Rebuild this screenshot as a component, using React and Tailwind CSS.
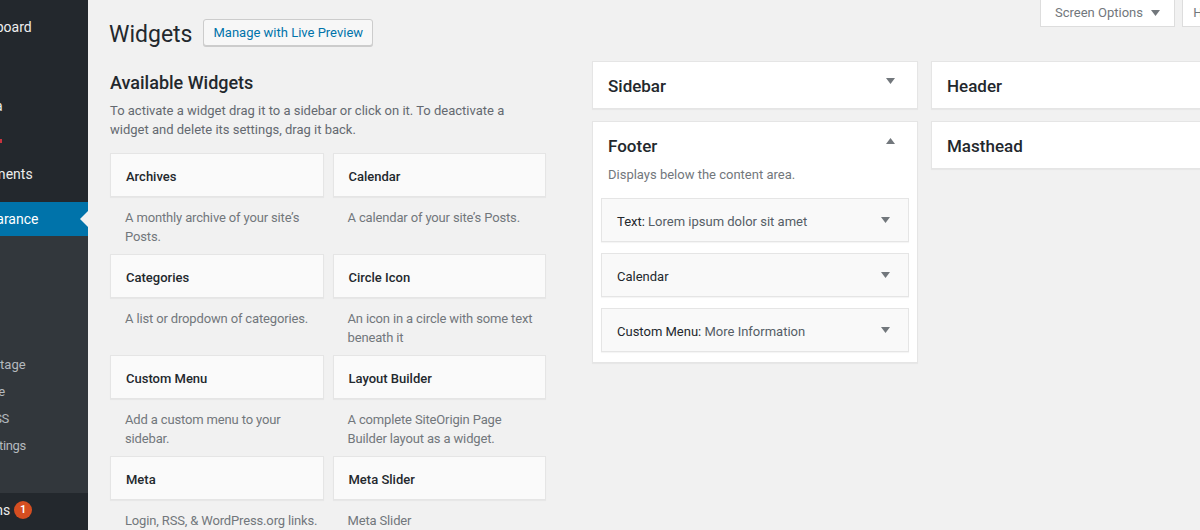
import { useState } from "react";

const FONT = "font-['Segoe_UI',Roboto,'Liberation_Sans',sans-serif]";

const menuTop = [
  { name: "Dashboard" },
  { sep: true },
  { name: "Posts" },
  { name: "Media" },
  { name: "Pages", dot: true, tight: true },
  { name: "Comments" },
  { sep: true },
];

const appearanceSub = [
  { name: "Themes" },
  { name: "Customize", tight: true },
  { name: "Widgets" },
  { name: "Menus" },
  { name: "About Vantage" },
  { name: "Edit Theme" },
  { name: "Custom CSS", tight: true },
  { name: "Theme Settings", tight: true },
  { name: "Editor" },
];

const availableWidgets = [
  { name: "Archives", description: "A monthly archive of your site’s Posts." },
  { name: "Calendar", description: "A calendar of your site’s Posts." },
  { name: "Categories", description: "A list or dropdown of categories." },
  { name: "Circle Icon", description: "An icon in a circle with some text beneath it" },
  { name: "Custom Menu", description: "Add a custom menu to your sidebar." },
  { name: "Layout Builder", description: "A complete SiteOrigin Page Builder layout as a widget." },
  { name: "Meta", description: "Login, RSS, & WordPress.org links." },
  { name: "Meta Slider", description: "Meta Slider" },
];

const footerWidgets = [
  { type: "Text", title: "Lorem ipsum dolor sit amet" },
  { type: "Calendar" },
  { type: "Custom Menu", title: "More Information" },
];

const Arrow = ({ up = false, className = "" }) => (
  <svg width="9" height="6" viewBox="0 0 9 6" className={className}>
    {up ? <path d="M0 6 L4.5 0 L9 6 Z" fill="#72777c" /> : <path d="M0 0 L9 0 L4.5 6 Z" fill="#72777c" />}
  </svg>
);

const AdminMenu = () => (
  <div className="w-[88px] shrink-0 overflow-hidden bg-[#23282d]">
    <div className="-ml-[72px] w-[160px] pt-[10px]">
      {menuTop.map((item, i) =>
        item.sep ? (
          <div key={i} className="h-[11px]" />
        ) : (
          <div
            key={item.name}
            className={`relative flex h-[34px] items-center pl-[36px] text-[14px] text-[#eeeeee] ${
              item.tight ? "tracking-[-0.8px]" : ""
            }`}
          >
            {item.name}
            {item.dot && <span className="absolute left-[71px] top-[16px] h-[4px] w-[3px] bg-[#c8333e]" />}
          </div>
        ),
      )}
      <div className="relative flex h-[34px] items-center bg-[#0073aa] pl-[36px] text-[14px] text-white">
        Appearance
        <span className="absolute right-0 top-[9px] h-0 w-0 border-y-[8px] border-r-[8px] border-y-transparent border-r-[#f1f1f1]" />
      </div>
      <div className="bg-[#32373c] py-[7px]">
        {appearanceSub.map((sub) => (
          <div
            key={sub.name}
            className={`flex h-[27px] items-center pl-[12px] text-[13px] text-[#b4b9be] ${
              sub.tight ? "tracking-[-0.35px]" : ""
            }`}
          >
            {sub.name}
          </div>
        ))}
      </div>
      <div className="flex h-[34px] items-center pl-[36px] text-[14px] text-[#eeeeee]">
        Plugins
        <span className="ml-[4px] flex h-[18px] w-[18px] items-center justify-center rounded-full bg-[#d54e21] text-[11px] font-semibold text-white">
          1
        </span>
      </div>
    </div>
  </div>
);

const SidebarBox = ({ name, open, description, children }) => (
  <div className="border border-[#e5e5e5] bg-white shadow-[0_1px_1px_rgba(0,0,0,0.04)]">
    <div className="flex h-[46px] items-center justify-between pl-[15px] pr-[22px] pt-[4px]">
      <h2 className="text-[17px] font-medium text-[#23282d]">{name}</h2>
      {open !== undefined && <Arrow up={open} className="mb-[12px]" />}
    </div>
    {description && (
      <p className="mt-[-2px] pl-[15px] text-[13px] leading-[18px] text-[#72777c]">{description}</p>
    )}
    {children && <div className="flex flex-col gap-[11px] px-[8px] pb-[10px] pt-[14px]">{children}</div>}
  </div>
);

export default function App() {
  const [widgets] = useState(availableWidgets);

  return (
    <div className={`flex h-[530px] w-[1200px] overflow-hidden bg-[#f1f1f1] ${FONT}`}>
      <AdminMenu />

      <main className="w-[1180px] shrink-0 pl-[22px]">
        <div className="flex items-start justify-between">
          <div className="mt-[19px] flex items-start gap-[11px]">
            <h1 className="-ml-[1px] mt-[2px] text-[23px] leading-[27px] text-[#23282d]">Widgets</h1>
            <button className="h-[27px] rounded-[3px] border border-[#cccccc] bg-[#f7f7f7] px-[9px] text-[13px] text-[#0073aa] shadow-[0_1px_0_#cccccc]">
              Manage with Live Preview
            </button>
          </div>
          <div className="mr-[22px] flex gap-[7px]">
            <div className="flex h-[27px] w-[135px] items-center justify-center gap-[8px] border border-t-0 border-[#dddddd] bg-white text-[13px] text-[#72777c]">
              Screen Options
              <Arrow />
            </div>
            <div className="flex h-[27px] w-[64px] items-center justify-center gap-[6px] border border-t-0 border-[#dddddd] bg-white text-[13px] text-[#72777c]">
              Help
              <Arrow />
            </div>
          </div>
        </div>

        <div className="flex items-start">
          {/* Available widgets */}
          <section className="mt-[23px] w-[436px] shrink-0">
            <h2 className="text-[18px] font-medium leading-[23px] text-[#23282d]">Available Widgets</h2>
            <p className="mt-[7px] text-[13px] leading-[19px] text-[#646970]">
              To activate a widget drag it to a sidebar or click on it. To deactivate a widget and delete its
              settings, drag it back.
            </p>
            <div className="mt-[14px] grid grid-cols-2 gap-[9px]">
              {widgets.map((w) => (
                <div key={w.name} className="h-[92px]">
                  <div className="flex h-[44px] items-center border border-[#e5e5e5] bg-[#fafafa] px-[15px] pt-[3px] text-[13px] font-medium text-[#23282d] shadow-[0_1px_1px_rgba(0,0,0,0.04)]">
                    {w.name}
                  </div>
                  <p className="ml-[15px] w-[194px] pt-[11px] text-[13px] leading-[19px] tracking-[-0.15px] text-[#72777c]">
                    {w.description}
                  </p>
                </div>
              ))}
            </div>
          </section>

          {/* Registered sidebars */}
          <div className="ml-[46px] mt-[13px] flex gap-[13px]">
            <div className="flex w-[326px] flex-col gap-[12px]">
              <SidebarBox name="Sidebar" open={false} />
              <SidebarBox name="Footer" open description="Displays below the content area.">
                {footerWidgets.map((fw) => (
                  <div
                    key={fw.type}
                    className="flex h-[44px] items-center justify-between border border-[#e5e5e5] bg-[#f9f9f9] pl-[15px] pr-[18px] pt-[3px] text-[13px] shadow-[0_1px_1px_rgba(0,0,0,0.04)]"
                  >
                    <span className="text-[#23282d]">
                      {fw.type}
                      {fw.title && (
                        <>
                          : <span className="text-[#555d66]">{fw.title}</span>
                        </>
                      )}
                    </span>
                    <Arrow className="mb-[3px]" />
                  </div>
                ))}
              </SidebarBox>
            </div>
            <div className="flex w-[326px] flex-col gap-[12px]">
              <SidebarBox name="Header" />
              <SidebarBox name="Masthead" />
            </div>
          </div>
        </div>
      </main>
    </div>
  );
}
